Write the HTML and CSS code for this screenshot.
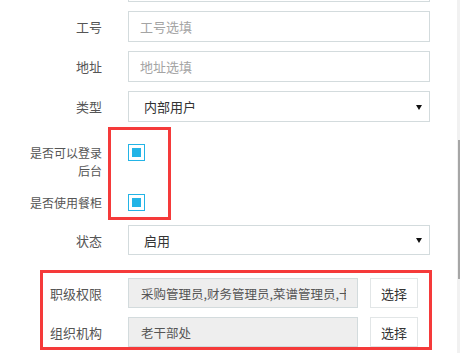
FILE: index.html
```html
<!DOCTYPE html>
<html lang="zh-CN">
<head>
    <meta charset="UTF-8">
    <meta name="viewport" content="width=device-width, initial-scale=1.0">
    <title>编辑用户</title>
    <link rel="stylesheet" href="styles.css">
</head>
<body>
    <div class="container">
        <form class="user-form">
            <div class="form-group">
                <label for="phone"></label>
                <input type="text" id="phone">
            </div>
            <div class="form-group">
                <label for="job_no">工号</label>
                <input type="text" id="job_no" placeholder="工号选填">
            </div>
            <div class="form-group">
                <label for="address">地址</label>
                <input type="text" id="address" placeholder="地址选填">
            </div>
            <div class="form-group">
                <label for="user_type">类型</label>
                <div class="select-wrap">
                    <select id="user_type">
                        <option>内部用户</option>
                        <option>外部用户</option>
                    </select>
                </div>
            </div>

            <!-- checkbox rows -->
            <div class="checks">
                <div class="form-group check-group">
                    <label for="can_login" class="small">是否可以登录后台</label>
                    <input type="checkbox" id="can_login" class="check" checked>
                </div>
                <div class="form-group check-group">
                    <label for="use_cabinet" class="small">是否使用餐柜</label>
                    <input type="checkbox" id="use_cabinet" class="check" checked>
                </div>
            </div>

            <div class="form-group short">
                <label for="status">状态</label>
                <div class="select-wrap">
                    <select id="status">
                        <option>启用</option>
                        <option>停用</option>
                    </select>
                </div>
            </div>

            <div class="picks">
                <div class="form-group short">
                    <label>职级权限</label>
                    <input type="text" class="readonly" value="采购管理员,财务管理员,菜谱管理员,卡务管理员" readonly>
                    <button type="button" class="pick-btn">选择</button>
                </div>
                <div class="form-group short">
                    <label>组织机构</label>
                    <input type="text" class="readonly" value="老干部处" readonly>
                    <button type="button" class="pick-btn">选择</button>
                </div>
            </div>
        </form>

        <!-- review marks -->
        <div class="mark mark-checks"></div>
        <div class="mark mark-picks"></div>
    </div>

    <div class="scrollbar"><div class="scrollbar-thumb"></div></div>
</body>
</html>
```

FILE: styles.css
```css
body {
    font-family: "Noto Sans CJK SC", "Noto Sans", sans-serif;
    margin: 0;
    padding: 0;
    background-color: #ffffff;
    overflow: hidden;
}
.container {
    position: relative;
    display: flow-root;
    height: 353px;
}
.user-form {
    margin-top: -29px;
    padding-left: 25px;
}
.form-group {
    display: flex;
    align-items: center;
    height: 31px;
    margin-bottom: 9px;
}
.form-group.short {
    height: 30px;
}
label {
    width: 77px;
    margin-right: 26px;
    flex-shrink: 0;
    text-align: right;
    font-size: 13px;
    color: #555;
}
label.small {
    font-size: 12px;
    line-height: 18px;
}
input[type="text"], select {
    box-sizing: border-box;
    width: 302px;
    height: 100%;
    padding: 0 11px;
    font-family: inherit;
    font-size: 13px;
    color: #444;
    border: 1px solid #d3dbdd;
    border-radius: 0;
    background-color: #fff;
    outline: none;
}
input::placeholder {
    color: #a4a4a4;
}
.select-wrap {
    position: relative;
    height: 100%;
}
.select-wrap select {
    appearance: none;
    -webkit-appearance: none;
    padding-left: 15px;
    color: #333;
}
.select-wrap::after {
    content: "";
    position: absolute;
    right: 8px;
    top: 50%;
    margin-top: -2px;
    border-left: 3px solid transparent;
    border-right: 3px solid transparent;
    border-top: 5px solid #111;
}
.checks {
    padding: 13px 0;
}
.check-group {
    align-items: flex-start;
    height: auto;
    margin-bottom: 14px;
}
.check-group:last-child {
    margin-bottom: 0;
}
.check {
    appearance: none;
    -webkit-appearance: none;
    box-sizing: border-box;
    width: 17px;
    height: 17px;
    margin: 0;
    border: 1px solid #23b4e6;
    background-color: #23b4e6;
    box-shadow: inset 0 0 0 3px #fff;
}
.picks {
    margin-top: 23px;
}
input.readonly {
    width: 230px;
    padding-left: 12px;
    font-size: 12.5px;
    background-color: #eeeeee;
    color: #555;
}
.pick-btn {
    box-sizing: border-box;
    width: 48px;
    height: 100%;
    margin-left: 12px;
    padding: 0;
    font-family: inherit;
    font-size: 13px;
    color: #333;
    background-color: #fff;
    border: 1px solid #e2e6e7;
    border-radius: 0;
}
.mark {
    position: absolute;
    box-sizing: border-box;
    border: 3px solid #f53a3a;
}
.mark-checks {
    left: 108px;
    top: 127px;
    width: 63px;
    height: 93px;
}
.mark-picks {
    left: 40px;
    top: 270px;
    width: 392px;
    height: 80px;
}
.scrollbar {
    position: fixed;
    top: 0;
    right: 0;
    width: 3px;
    height: 100%;
    background-color: #f1f1f1;
}
.scrollbar-thumb {
    width: 2px;
    height: 139px;
    margin-top: 140px;
    margin-left: 1px;
    background-color: #a6a6a6;
}
```
